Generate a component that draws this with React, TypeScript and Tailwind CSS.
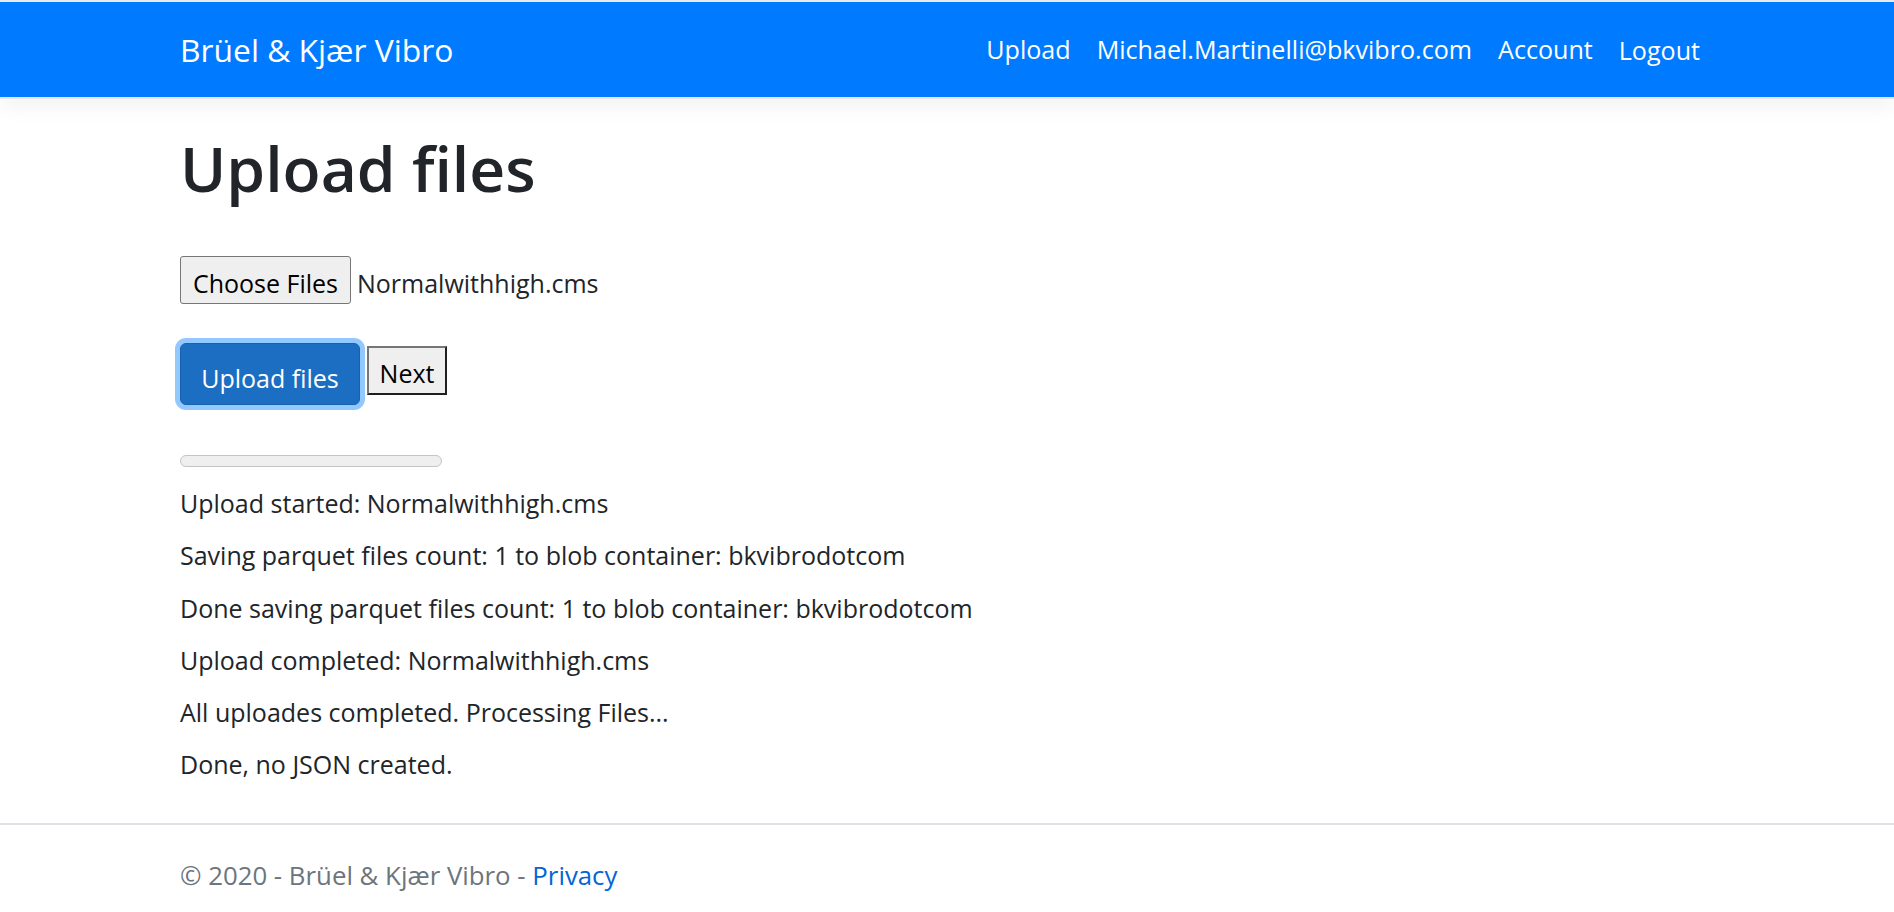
import React from 'react';

const FONT = "font-['Open_Sans',_'Noto_Sans',_sans-serif]";

const NAV_LINKS = ['Upload', 'Michael.Martinelli@bkvibro.com', 'Account'];

const MESSAGES = [
  'Upload started: Normalwithhigh.cms',
  'Saving parquet files count: 1 to blob container: bkvibrodotcom',
  'Done saving parquet files count: 1 to blob container: bkvibrodotcom',
  'Upload completed: Normalwithhigh.cms',
  'All uploades completed. Processing Files...',
  'Done, no JSON created.',
];

export default function App() {
  return (
    <div className={`${FONT} min-h-screen bg-white text-[#212529] text-[25px] leading-[36px]`}>
      {/* Navbar */}
      <div className="h-[2px] bg-[#e9ecef]" />
      <header className="h-[97px] bg-[#007bff] border-b-2 border-[#e5e5e5] shadow-[0_8px_20px_rgba(0,0,0,0.05)]">
        <nav className="w-[1534px] mx-auto h-[95px] flex items-center justify-between">
          <a className="text-white text-[31.8px] leading-[40px]">Brüel &amp; Kjær Vibro</a>
          <ul className="flex items-center gap-[26px] mr-[14px] text-[25.1px] -mt-[2px]">
            {NAV_LINKS.map((link) => (
              <li key={link} className="text-white">
                {link}
              </li>
            ))}
            <li className="text-white mt-[3px]">Logout</li>
          </ul>
        </nav>
      </header>

      <main className="w-[1534px] mx-auto">
        <h1 className="mt-[32px] text-[62.4px] leading-[73px] font-semibold">Upload files</h1>

        {/* File input */}
        <div className="mt-[52px] flex items-baseline">
          <button className="h-[48px] w-[171px] box-border border border-[#767676] rounded-[3px] bg-[#efefef] text-black pt-[5px] leading-[36px] text-center">
            Choose Files
          </button>
          <span className="ml-[6px]">Normalwithhigh.cms</span>
        </div>

        {/* Actions */}
        <div className="mt-[39px] flex items-start">
          <button className="h-[62px] w-[180px] box-border border border-[#1861ac] rounded-[6px] bg-[#1b6ec2] text-white pt-[7px] leading-[36px] text-center shadow-[0_0_0_5px_#92c7ff]">
            Upload files
          </button>
          <button className="ml-[7px] mt-[3px] h-[49px] w-[80px] box-border border-2 border-t-[#767676] border-l-[#767676] border-b-[#1f1f1f] border-r-[#1f1f1f] bg-[#efefef] text-black pt-[4px] leading-[36px] text-center">
            Next
          </button>
        </div>

        {/* Progress */}
        <div className="mt-[50px] h-[12px] w-[262px] rounded-full border border-[#c4c4c4] bg-[#efefef]" />

        {/* Status log */}
        <div className="mt-[10px]">
          {MESSAGES.map((m) => (
            <div key={m} className="leading-[52.3px]">
              {m}
            </div>
          ))}
        </div>
      </main>

      {/* Footer */}
      <footer className="mt-[32px] border-t-2 border-[#dee2e6]">
        <div className="w-[1534px] mx-auto text-[#6c757d] text-[25.8px] leading-[100px] whitespace-nowrap">
          © 2020 - Brüel &amp; Kjær Vibro - <a className="text-[#0366d6]">Privacy</a>
        </div>
      </footer>
    </div>
  );
}
